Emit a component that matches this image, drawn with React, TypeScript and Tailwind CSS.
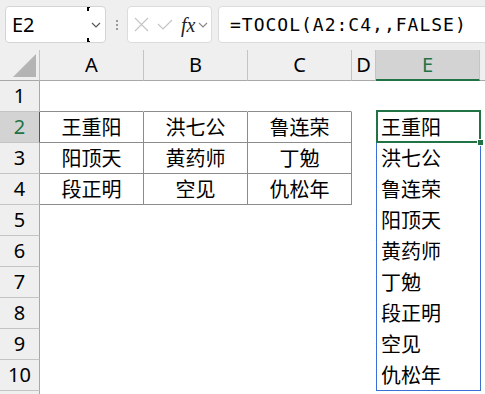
import React from "react";

const CJK = "font-['Noto_Sans_CJK_SC',sans-serif]";
const SANS = "font-['Noto_Sans',sans-serif]";

const table: string[][] = [
  ["王重阳", "洪七公", "鲁连荣"],
  ["阳顶天", "黄药师", "丁勉"],
  ["段正明", "空见", "仇松年"],
];
const spill = ["王重阳", "洪七公", "鲁连荣", "阳顶天", "黄药师", "丁勉", "段正明", "空见", "仇松年"];

function Chevron({ color }: { color: string }) {
  return (
    <svg width="10" height="6" viewBox="0 0 10 6" fill="none">
      <path d="M1 1 L5 5 L9 1" stroke={color} strokeWidth="1.1" />
    </svg>
  );
}

function tableCellClass(r: number, c: number) {
  if (c <= 2 && r >= 2 && r <= 4) return "border-r border-b border-[#8c8c8c]";
  if (c <= 2 && r === 1) return "border-r border-b border-r-transparent border-b-[#8c8c8c]";
  return "border-r border-b border-transparent";
}

const colW = ["w-[104px]", "w-[104px]", "w-[104px]", "w-[24px]", "w-[104px]"];

export default function App() {
  const rows = Array.from({ length: 11 }, (_, i) => i + 1);
  return (
    <div className="w-[485px] h-[394px] overflow-hidden bg-white relative">
      {/* Toolbar */}
      <div className="h-[50px] bg-[#efefef] flex items-start pt-[6px] pl-[5px]">
        <div className="relative w-[101px] h-[37px] bg-white border border-[#d4d4d4] rounded-[4px] flex items-center shrink-0">
          <span className={`${SANS} text-[20px] leading-none text-black pl-[6px] flex-1`}>E2</span>
          <div className="mr-[4px] flex items-center">
            <Chevron color="#555" />
          </div>
          <div className="absolute left-[81px] top-[0px] w-[3px] h-[4px] border-l-2 border-t border-black" />
          <div className="absolute left-[81px] bottom-[0px] w-[3px] h-[4px] border-l-2 border-b border-black" />
        </div>
        <div className="w-[21px] h-[37px] flex flex-col items-center justify-center gap-[2px] shrink-0">
          <div className="w-[2px] h-[2px] bg-[#9a9a9a]" />
          <div className="w-[2px] h-[2px] bg-[#9a9a9a]" />
          <div className="w-[2px] h-[2px] bg-[#9a9a9a]" />
        </div>
        <div className="w-[85px] h-[37px] bg-white border border-[#dcdcdc] rounded-[4px] flex items-center pl-[5px] shrink-0">
          <svg width="15" height="15" viewBox="0 0 15 15" fill="none" className="ml-[1px]">
            <path d="M1 1 L14 14 M14 1 L1 14" stroke="#c4c4c4" strokeWidth="1.1" />
          </svg>
          <svg width="16" height="11" viewBox="0 0 16 11" fill="none" className="ml-[8px]">
            <path d="M1 5 L6 10 L15 1" stroke="#c4c4c4" strokeWidth="1.1" />
          </svg>
          <span className="ml-[8px] font-['Liberation_Serif',serif] italic text-[20px] leading-none text-[#222]">fx</span>
          <div className="ml-[3px] flex items-center">
            <Chevron color="#888" />
          </div>
        </div>
        <div className="ml-[6px] -mr-[10px] flex-1 h-[37px] bg-white border border-[#dcdcdc] rounded-[4px] flex items-center pl-[11px]">
          <span className="font-['DejaVu_Sans_Mono',monospace] text-[18px] tracking-[1px] leading-none text-black whitespace-nowrap">
            =TOCOL(A2:C4,,FALSE)
          </span>
        </div>
      </div>

      {/* Sheet */}
      <div className="relative">
        {/* Column header row */}
        <div className={`flex h-[31px] ${SANS} text-[20px] leading-none`}>
          <div className="w-[40px] shrink-0 bg-[#efefef] border-r border-b border-r-[#c4c4c4] border-b-[#a8a8a8] relative">
            <svg width="24" height="23" viewBox="0 0 24 23" className="absolute left-[13px] top-[4px]">
              <path d="M23 0 L23 23 L0 23 Z" fill="#b4b4b4" />
            </svg>
          </div>
          {["A", "B", "C", "D"].map((l, i) => (
            <div
              key={l}
              className={`${colW[i]} shrink-0 bg-[#efefef] border-r border-b border-r-[#c4c4c4] border-b-[#a8a8a8] flex items-center justify-center text-black`}
            >
              {l}
            </div>
          ))}
          <div className="w-[104px] shrink-0 bg-[#d3d3d3] border-r border-b-2 border-r-[#c4c4c4] border-b-[#217346] flex items-center justify-center text-[#217346]">
            E
          </div>
          <div className="flex-1 bg-[#efefef] border-b border-b-[#a8a8a8]" />
        </div>

        {rows.map((r) => {
          const sel = r === 2;
          return (
            <div key={r} className="flex h-[31px]">
              <div
                className={`w-[40px] shrink-0 border-r border-b border-b-[#c4c4c4] flex items-center justify-center ${SANS} text-[20px] leading-none ${
                  sel ? "bg-[#d3d3d3] text-[#217346] border-r-[#217346]" : "bg-[#efefef] text-black border-r-[#a8a8a8]"
                }`}
              >
                {r <= 10 ? r : ""}
              </div>
              {[0, 1, 2].map((c) => (
                <div
                  key={c}
                  className={`${colW[c]} shrink-0 ${tableCellClass(r, c)} flex items-center justify-center ${CJK} text-[20px] leading-none text-black`}
                >
                  {r >= 2 && r <= 4 ? table[r - 2][c] : ""}
                </div>
              ))}
              <div className="w-[24px] shrink-0 border-r border-b border-transparent" />
              <div className={`w-[104px] shrink-0 border-r border-b border-transparent flex items-center pl-[5px] ${CJK} text-[20px] leading-none text-black`}>
                {r >= 2 && r <= 10 ? spill[r - 2] : ""}
              </div>
              <div className="flex-1" />
            </div>
          );
        })}

        {/* Spill range border */}
        <div className="absolute left-[376px] top-[61px] w-[105px] h-[280px] border border-[#3a6fd8] pointer-events-none" />
        {/* Active cell */}
        <div className="absolute left-[376px] top-[60px] w-[105px] h-[33px] border-2 border-[#217346] pointer-events-none" />
        {/* Fill handle */}
        <div className="absolute left-[477px] top-[89px] w-[7px] h-[7px] bg-[#217346] border border-white pointer-events-none" />
      </div>
    </div>
  );
}
